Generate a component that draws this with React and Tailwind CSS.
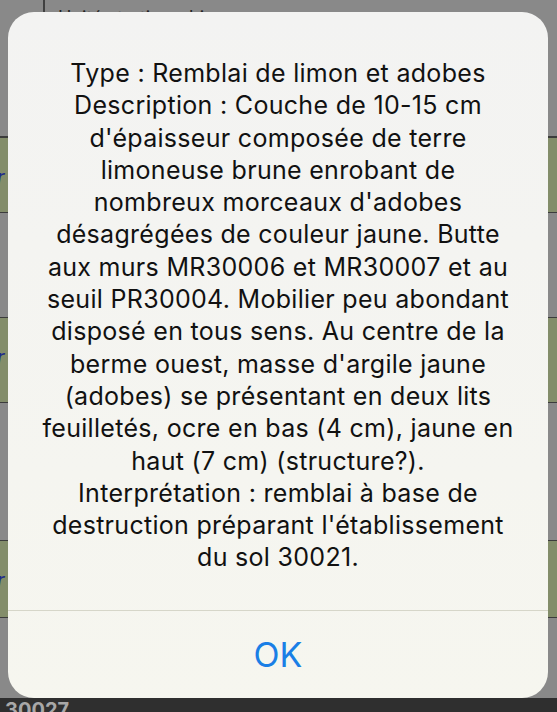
import React from 'react';

const lines = [
  'Type : Remblai de limon et adobes',
  'Description : Couche de 10-15 cm',
  "d'épaisseur composée de terre",
  'limoneuse brune enrobant de',
  "nombreux morceaux d'adobes",
  'désagrégées de couleur jaune. Butte',
  'aux murs MR30006 et MR30007 et au',
  'seuil PR30004. Mobilier peu abondant',
  'disposé en tous sens. Au centre de la',
  "berme ouest, masse d'argile jaune",
  '(adobes) se présentant en deux lits',
  'feuilletés, ocre en bas (4 cm), jaune en',
  'haut (7 cm) (structure?).',
  'Interprétation : remblai à base de',
  "destruction préparant l'établissement",
  'du sol 30021.',
];

// rangée de la liste en arrière-plan (assombrie par l'alerte)
function Row({ green, h, mark }) {
  return (
    <div className={`relative w-full border-b border-[#3c3c3c] ${green ? 'bg-[#838d6a]' : 'bg-[#898989]'} ${h}`}>
      {mark && (
        <span className="absolute left-[-3px] top-[24px] text-[20px] italic text-[#1c2a8a]">r</span>
      )}
    </div>
  );
}

export default function App() {
  return (
    <div
      className="relative w-[557px] h-[712px] overflow-hidden bg-[#898989]"
      style={{ fontFamily: 'Inter, "Noto Sans", sans-serif' }}
    >
      {/* liste en fond */}
      <div className="flex flex-col">
        <div className="relative h-[138px] border-b-2 border-[#3c3c3c] bg-[#898989]">
          <div className="absolute left-[43px] top-0 h-full w-[2px] bg-[#404040]" />
          <span className="absolute left-[58px] top-[4px] text-[18px] text-[#222]">Unité stratigraphique</span>
        </div>
        <Row green h="h-[75px]" mark />
        <Row h="h-[105px]" />
        <Row green h="h-[85px]" mark />
        <Row h="h-[138px]" />
        <Row green h="h-[77px]" mark />
        <div className="h-[80px] bg-[#898989]" />
        <div className="h-[20px] bg-[#2f2f2f] pl-[5px] pt-[1px]">
          <span className="text-[20px] font-bold leading-none text-[#a8a8a8]">30027</span>
        </div>
      </div>

      {/* alerte */}
      <div className="absolute left-[8px] top-[12px] flex h-[686px] w-[540px] flex-col overflow-hidden rounded-[26px] bg-gradient-to-b from-[#f3f3f2] to-[#f6f6ef]">
        <div className="flex flex-1 flex-col items-center pt-[45px] text-center text-[25px] leading-[32.3px] tracking-[0.3px] text-[#111]">
          {lines.map((l, i) => (
            <div key={i} className="whitespace-nowrap">{l}</div>
          ))}
        </div>
        <div className="h-px bg-[#d6d6c9]" />
        <button className="flex h-[87px] items-center justify-center text-[34px] text-[#1a7fe6]">
          OK
        </button>
      </div>
    </div>
  );
}
